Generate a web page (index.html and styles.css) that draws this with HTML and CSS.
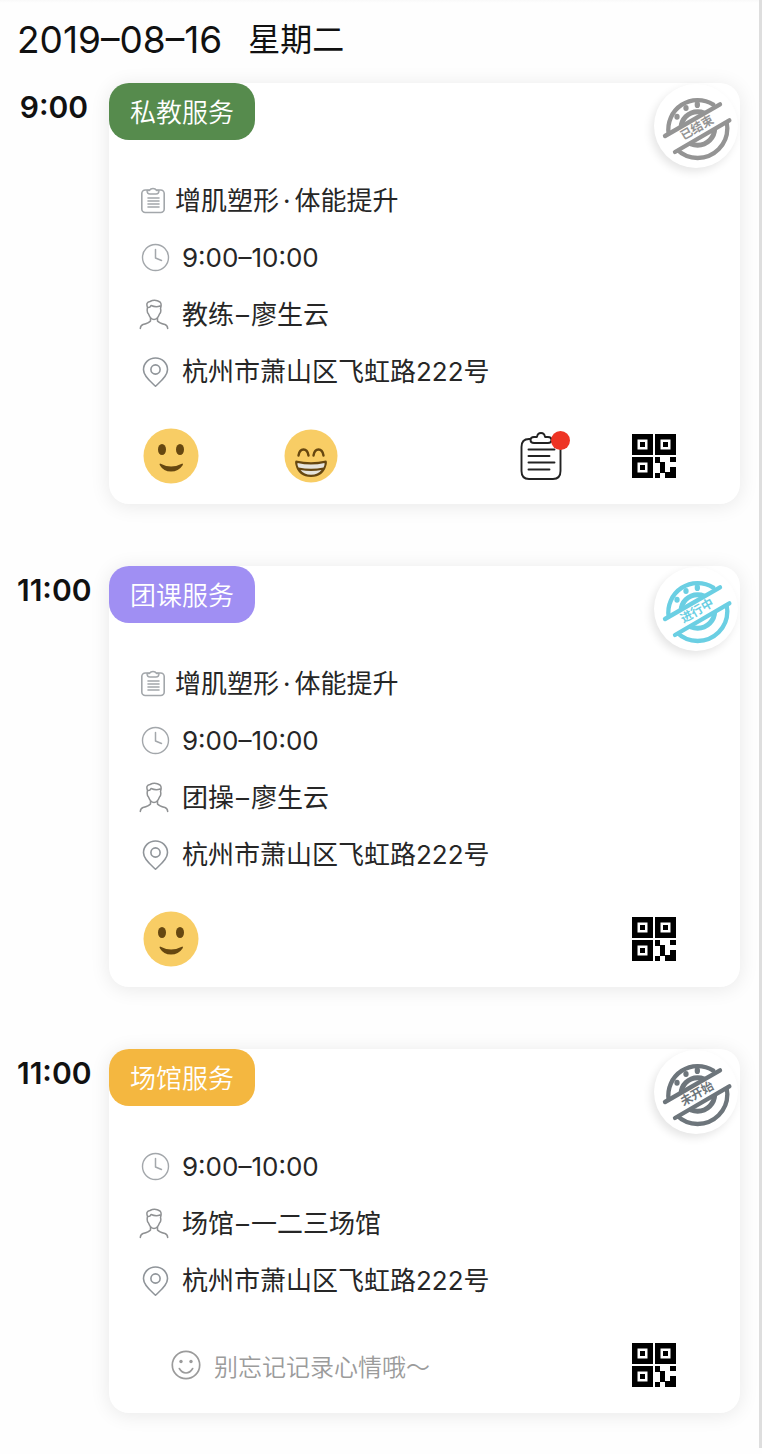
FILE: index.html
```html
<!DOCTYPE html>
<html lang="zh-CN">
<head>
<meta charset="utf-8">
<meta name="viewport" content="width=device-width, initial-scale=1">
<title>课程日程</title>
<link rel="stylesheet" href="styles.css">
</head>
<body>
<svg class="sprite" aria-hidden="true">
  <symbol id="i-note" viewBox="0 0 28 28">
    <rect x="2.8" y="3" width="22.4" height="22.5" rx="3.5" stroke-width="1.6"/>
    <path d="M8 3.500q0 3.500 3 3.500h6q3 0 3-3.500h-2.500q-1-2-3.500-2t-3.500 2z" fill="#fff" stroke-width="1.400"/>
    <path d="M9 11h11M9 14h11M9 17h11M9 20h11" stroke-width="1.600"/>
  </symbol>
  <symbol id="i-clock" viewBox="0 0 30 30">
    <circle cx="15.500" cy="14.500" r="13" stroke-width="1.4"/>
    <path d="M15.500 6.500v8.500l6 2.500" stroke-width="1.500"/>
  </symbol>
  <symbol id="i-user" viewBox="0 0 32 32">
    <path d="M8.500 8.500Q6.500 3 11 2.500Q16-.2 21 3Q23 5 21.500 9.500M8.500 8.500Q11 9 12 6.500Q17 8.500 21 7M8.500 8.500Q7.500 13 9.500 15Q11.500 20.500 15 20.500T20.500 15Q22.500 13 21.500 9.500M11.500 18.500v3.500Q10 24 4 25.500Q1.500 26.500 1.300 29.500M18.500 18.500v3.500Q20 24 26 25.500Q28.500 26.500 28.700 29.500" stroke-width="1.500"/>
  </symbol>
  <symbol id="i-pin" viewBox="0 0 30 32">
    <path d="M15.500 30.200C11 26 3.500 20.500 3.500 13.800C3.500 7 8.800 2 15.500 2s12 5 12 11.800C27.500 20.500 20 26 15.500 30.200z" stroke-width="1.600"/>
    <circle cx="15.500" cy="13.500" r="4.600" stroke-width="1.600"/>
  </symbol>
  <symbol id="i-smile" viewBox="0 0 30 30">
    <circle cx="15" cy="15" r="13.700" stroke-width="1.700"/>
    <path d="M8.300 18.500Q11 23 15 23t6.700-4.500" stroke-width="1.600"/>
    <circle cx="10" cy="11.500" r="1.700" fill="currentColor" stroke="none"/>
    <circle cx="20" cy="11.500" r="1.700" fill="currentColor" stroke="none"/>
  </symbol>
  <symbol id="i-happy" viewBox="0 0 56 56">
    <circle cx="28" cy="28" r="27.500" fill="#f8cd65"/>
    <ellipse cx="19" cy="21.500" rx="4" ry="5.500" fill="#664710"/>
    <ellipse cx="37" cy="21.500" rx="4" ry="5.500" fill="#664710"/>
    <path d="M17 35.500Q28 41.500 39.500 35.500Q40.500 36 39.500 37.500Q35.500 43.500 28 43.500T17 37.500Q16 36 17 35.500z" fill="#664710"/>
  </symbol>
  <symbol id="i-grin" viewBox="0 0 54 54">
    <circle cx="27" cy="27" r="26.500" fill="#f8cd65"/>
    <path d="M14.500 26.500q1-6 5-6t5 6M29.500 26.500q1-6 5-6t5 6" fill="none" stroke="#664710" stroke-width="2.400" stroke-linecap="round"/>
    <path d="M12 31.500Q27 35 42 31.500Q43.500 32 42.500 36Q39.500 48 27 48T11.500 36Q10.500 32 12 31.500z" fill="#664710"/>
    <path d="M13.500 34Q27 37 40.500 34Q41 36 39.500 38.500Q27 41 14.500 38.500Q13 36 13.500 34z" fill="#e6e4dc"/>
    <path d="M16.500 41Q27 43 37.500 41Q34 45.800 27 45.800T16.500 41z" fill="#e6e4dc"/>
  </symbol>
  <symbol id="i-clipboard" viewBox="0 0 42 50">
    <path d="M11.500 8H9Q1.500 8 1.500 16V40Q1.500 48 9 48H33Q40.500 48 40.500 40V16Q40.500 8 33 8H30.500" stroke-width="1.900"/>
    <path d="M14 6Q10.500 6 10.500 9T14 12H28Q31.500 12 31.500 9T28 6H25Q24.500 2 21 2T17 6z" fill="#fff" stroke-width="1.900"/>
    <path d="M8.500 18.500h26M8.500 25h21M8.500 31.500h26M8.500 38.500h21" stroke-width="1.900"/>
  </symbol>
  <symbol id="i-qr" viewBox="0 0 44 44">
    <path fill-rule="evenodd" d="M0 0h21v21H0zM5.500 5.500v10h10v-10zM23 0h21v21H23zM28.500 5.500v10h10v-10zM0 23h21v21H0zM5.500 28.500v10h10v-10z"/>
    <path d="M8 8h5v5H8zM31 8h5v5h-5zM8 31h5v5H8zM23 23h5v5h5v10h5v-5h6v11H33v-5h-5v-10h-5zM38 23h6v5h-6zM23 39h5v5h-5z"/>
  </symbol>
  <symbol id="i-stamp" viewBox="0 0 252 252">
    <clipPath id="above"><path d="M0 0H252V30L0 175z"/></clipPath>
    <clipPath id="below"><path d="M252 94V252H0V240z"/></clipPath>
    <g stroke-width="13">
      <g clip-path="url(#above)"><path d="M44 150A88 88 0 0 1 178 62"/><circle cx="131" cy="133" r="50" stroke-width="15"/></g>
      <g clip-path="url(#below)"><circle cx="131" cy="133" r="89"/><circle cx="131" cy="133" r="51" stroke-width="15"/></g>
      <path d="M33 156L198 61M63 204L226 109"/>
    </g>
    <g fill="currentColor" stroke="none">
      <ellipse cx="69" cy="98" rx="8" ry="9"/><ellipse cx="96" cy="72" rx="8" ry="9"/><ellipse cx="130" cy="62" rx="8" ry="10"/>
    </g>
  </symbol>
</svg>

<main class="schedule">
  <h1 class="date"><time datetime="2019-08-16">2019–08–16</time><span>星期二</span></h1>

  <section class="slot">
    <time class="slot-time">9:00</time>
    <article class="card">
      <h2 class="tag tag-private">私教服务</h2>
      <div class="stamp stamp-done">
        <svg class="line-icon"><use href="#i-stamp"/></svg>
        <span class="stamp-text">已结束</span>
      </div>
      <ul class="info">
        <li class="info-title"><svg class="line-icon note"><use href="#i-note"/></svg><span>增肌塑形<span class="dot">·</span>体能提升</span></li>
        <li><svg class="line-icon clock"><use href="#i-clock"/></svg><span>9:00–10:00</span></li>
        <li><svg class="line-icon user"><use href="#i-user"/></svg><span>教练<span class="dash">–</span>廖生云</span></li>
        <li><svg class="line-icon pin"><use href="#i-pin"/></svg><span>杭州市萧山区飞虹路222号</span></li>
      </ul>
      <div class="actions">
        <button class="mood" type="button" aria-label="微笑"><svg><use href="#i-happy"/></svg></button>
        <button class="mood mood-grin" type="button" aria-label="大笑"><svg><use href="#i-grin"/></svg></button>
        <button class="record" type="button" aria-label="课程记录"><svg class="line-icon"><use href="#i-clipboard"/></svg><span class="badge"></span></button>
        <button class="qr" type="button" aria-label="二维码"><svg><use href="#i-qr"/></svg></button>
      </div>
    </article>
  </section>

  <section class="slot">
    <time class="slot-time">11:00</time>
    <article class="card">
      <h2 class="tag tag-group">团课服务</h2>
      <div class="stamp stamp-active">
        <svg class="line-icon"><use href="#i-stamp"/></svg>
        <span class="stamp-text">进行中</span>
      </div>
      <ul class="info">
        <li class="info-title"><svg class="line-icon note"><use href="#i-note"/></svg><span>增肌塑形<span class="dot">·</span>体能提升</span></li>
        <li><svg class="line-icon clock"><use href="#i-clock"/></svg><span>9:00–10:00</span></li>
        <li><svg class="line-icon user"><use href="#i-user"/></svg><span>团操<span class="dash">–</span>廖生云</span></li>
        <li><svg class="line-icon pin"><use href="#i-pin"/></svg><span>杭州市萧山区飞虹路222号</span></li>
      </ul>
      <div class="actions">
        <button class="mood" type="button" aria-label="微笑"><svg><use href="#i-happy"/></svg></button>
        <button class="qr" type="button" aria-label="二维码"><svg><use href="#i-qr"/></svg></button>
      </div>
    </article>
  </section>

  <section class="slot">
    <time class="slot-time">11:00</time>
    <article class="card">
      <h2 class="tag tag-venue">场馆服务</h2>
      <div class="stamp stamp-pending">
        <svg class="line-icon"><use href="#i-stamp"/></svg>
        <span class="stamp-text">未开始</span>
      </div>
      <ul class="info">
        <li><svg class="line-icon clock"><use href="#i-clock"/></svg><span>9:00–10:00</span></li>
        <li><svg class="line-icon user"><use href="#i-user"/></svg><span>场馆<span class="dash">–</span>一二三场馆</span></li>
        <li><svg class="line-icon pin"><use href="#i-pin"/></svg><span>杭州市萧山区飞虹路222号</span></li>
      </ul>
      <div class="actions">
        <button class="hint" type="button"><svg class="line-icon"><use href="#i-smile"/></svg><span>别忘记记录心情哦～</span></button>
        <button class="qr" type="button" aria-label="二维码"><svg><use href="#i-qr"/></svg></button>
      </div>
    </article>
  </section>
</main>
</body>
</html>
```
FILE: styles.css
```css
* {
  box-sizing: border-box;
}

body {
  margin: 0;
  background: #fefefe;
  color: #262626;
  font-family: Inter, "Noto Sans CJK SC", sans-serif;
  font-size: 26px;
}

button {
  padding: 0;
  border: 0;
  background: none;
  color: inherit;
  font: inherit;
  cursor: pointer;
}

svg {
  display: block;
  flex: none;
}

.sprite {
  position: absolute;
  width: 0;
  height: 0;
}

.line-icon {
  fill: none;
  stroke: currentColor;
  stroke-linecap: round;
  stroke-linejoin: round;
}

.schedule {
  padding: 16px 19px 35px 17px;
  border-right: 3px solid #dedede;
  background: linear-gradient(#f9f9f9, #fefefe 3px);
}

.date {
  display: flex;
  align-items: center;
  gap: 26px;
  margin: 0 0 19px;
  color: #111;
  font-size: 37px;
  font-weight: 400;
  line-height: 48px;
}

.date span {
  font-size: 32px;
}

.slot {
  display: grid;
  grid-template-columns: 74px 1fr;
  column-gap: 18px;
}

.slot + .slot {
  margin-top: 62px;
}

.slot-time {
  padding-top: 4px;
  color: #111;
  font-size: 30px;
  font-weight: 600;
  line-height: 40px;
  text-align: center;
}

.card {
  position: relative;
  padding-bottom: 20px;
  border-radius: 20px;
  background: #fff;
  box-shadow: 0 2px 20px rgba(0, 0, 0, .09);
}

.tag {
  width: fit-content;
  margin: 0;
  padding: 2px 21px 0;
  border-radius: 20px;
  color: #fff;
  font-size: 26px;
  font-weight: 350;
  line-height: 55px;
}

.tag-private { background: #568b4d; }
.tag-group { background: #a08ff3; }
.tag-venue { background: #f4b740; }

.stamp {
  position: absolute;
  top: 1px;
  right: 2px;
  display: grid;
  place-items: center;
  width: 84px;
  height: 84px;
  border-radius: 50%;
  background: #fff;
  box-shadow: -3px 4px 8px rgba(0, 0, 0, .1);
}

.stamp > * {
  grid-area: 1 / 1;
}

.stamp svg {
  width: 84px;
  height: 84px;
}

.stamp-text {
  padding-top: 4px;
  font-size: 12px;
  font-weight: 700;
  line-height: 12px;
  transform: rotate(-30deg);
}

.stamp-done { color: #949494; }
.stamp-active { color: #6bcfe3; }
.stamp-pending { color: #6d757b; }

.info {
  margin: 0;
  padding: 32px 30px 0;
  list-style: none;
}

.info li {
  display: grid;
  grid-template-columns: 32px 1fr;
  align-items: center;
  justify-items: start;
  column-gap: 11px;
  min-height: 57px;
  line-height: 38px;
}

.info .info-title {
  grid-template-columns: 28px 1fr;
  column-gap: 8px;
}

.info svg {
  justify-self: center;
  color: #a3a7ab;
}

.note { width: 28px; height: 28px; }
.clock { width: 30px; height: 30px; }
.info .user { width: 32px; height: 32px; color: #8f9193; }
.info .pin { width: 30px; height: 32px; color: #8f9499; }

.dot {
  margin: 0 4px;
}

.dash {
  margin: 0 2px;
}

.actions {
  display: flex;
  align-items: center;
  height: 56px;
  margin-top: 28px;
  padding: 0 64px 0 34px;
}

.mood svg {
  width: 56px;
  height: 56px;
}

.mood-grin {
  margin-left: 85px;
}

.mood-grin svg {
  width: 54px;
  height: 54px;
}

.record {
  position: relative;
  margin-left: auto;
  color: #222;
}

.record svg {
  width: 42px;
  height: 50px;
}

.badge {
  position: absolute;
  top: 0;
  right: -8px;
  width: 19px;
  height: 19px;
  border-radius: 50%;
  background: #ee3424;
}

.qr {
  margin-left: auto;
  color: #000;
}

.record + .qr {
  margin-left: 70px;
}

.qr svg {
  width: 44px;
  height: 44px;
}

.hint {
  display: flex;
  align-items: center;
  gap: 13px;
  margin-left: 28px;
  color: #9b9b9b;
  font-size: 24px;
  font-weight: 350;
}

.hint svg {
  width: 30px;
  height: 30px;
}
```
